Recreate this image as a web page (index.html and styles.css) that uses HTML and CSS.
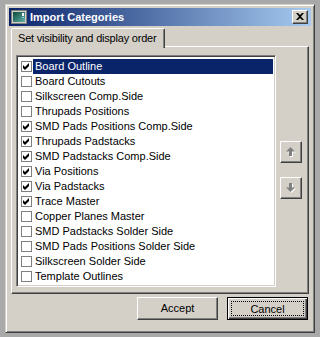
FILE: index.html
```html
<!DOCTYPE html>
<html>
<head>
<meta charset="utf-8">
<link rel="stylesheet" href="styles.css">
</head>
<body>
<div class="window">
  <div class="titlebar">
    <svg class="ticon" width="16" height="16" viewBox="0 0 16 16">
      <defs>
        <linearGradient id="ig" x1="0" y1="0" x2="1" y2="1">
          <stop offset="0" stop-color="#0d4a3c"/>
          <stop offset="1" stop-color="#5fb0a8"/>
        </linearGradient>
      </defs>
      <rect x="0.5" y="1.5" width="15" height="13" fill="#d4d0c8" stroke="#808080"/>
      <rect x="2" y="3" width="12" height="10" fill="url(#ig)"/>
      <rect x="11" y="4" width="2" height="3" fill="#ffffff"/>
      <rect x="11" y="8" width="2" height="1" fill="#9ad0f0"/>
    </svg>
    <span class="ttext">Import Categories</span>
    <div class="closebtn">
      <svg width="8" height="7" viewBox="0 0 8 7">
        <path d="M0 0h2l2 2l2-2h2l-3 3.5l3 3.5h-2l-2-2l-2 2h-2l3-3.5z" fill="#000"/>
      </svg>
    </div>
  </div>
  <div class="content">
    <div class="tabs"><div class="tab">Set visibility and display order</div></div>
    <div class="panel">
      <div class="listbox">
        <div class="row sel"><span class="cb on"><svg width="7" height="7" viewBox="0 0 7 7"><path d="M0 2L2 4L6 0V3L2 7L0 5Z" fill="#000"/></svg></span><span class="lbl">Board Outline</span></div>
        <div class="row"><span class="cb"></span><span class="lbl">Board Cutouts</span></div>
        <div class="row"><span class="cb"></span><span class="lbl">Silkscreen Comp.Side</span></div>
        <div class="row"><span class="cb"></span><span class="lbl">Thrupads Positions</span></div>
        <div class="row"><span class="cb on"><svg width="7" height="7" viewBox="0 0 7 7"><path d="M0 2L2 4L6 0V3L2 7L0 5Z" fill="#000"/></svg></span><span class="lbl">SMD Pads Positions Comp.Side</span></div>
        <div class="row"><span class="cb on"><svg width="7" height="7" viewBox="0 0 7 7"><path d="M0 2L2 4L6 0V3L2 7L0 5Z" fill="#000"/></svg></span><span class="lbl">Thrupads Padstacks</span></div>
        <div class="row"><span class="cb on"><svg width="7" height="7" viewBox="0 0 7 7"><path d="M0 2L2 4L6 0V3L2 7L0 5Z" fill="#000"/></svg></span><span class="lbl">SMD Padstacks Comp.Side</span></div>
        <div class="row"><span class="cb on"><svg width="7" height="7" viewBox="0 0 7 7"><path d="M0 2L2 4L6 0V3L2 7L0 5Z" fill="#000"/></svg></span><span class="lbl">Via Positions</span></div>
        <div class="row"><span class="cb on"><svg width="7" height="7" viewBox="0 0 7 7"><path d="M0 2L2 4L6 0V3L2 7L0 5Z" fill="#000"/></svg></span><span class="lbl">Via Padstacks</span></div>
        <div class="row"><span class="cb on"><svg width="7" height="7" viewBox="0 0 7 7"><path d="M0 2L2 4L6 0V3L2 7L0 5Z" fill="#000"/></svg></span><span class="lbl">Trace Master</span></div>
        <div class="row"><span class="cb"></span><span class="lbl">Copper Planes Master</span></div>
        <div class="row"><span class="cb"></span><span class="lbl">SMD Padstacks Solder Side</span></div>
        <div class="row"><span class="cb"></span><span class="lbl">SMD Pads Positions Solder Side</span></div>
        <div class="row"><span class="cb"></span><span class="lbl">Silkscreen Solder Side</span></div>
        <div class="row"><span class="cb"></span><span class="lbl">Template Outlines</span></div>
      </div>
      <div class="arrows">
        <div class="abtn up">
          <svg width="10" height="10" viewBox="0 0 10 10">
            <path d="M5.5 1L10 5.5H7V10H4V5.5H1Z" fill="#ffffff"/>
            <path d="M4.5 0L9 4.5H6V9H3V4.5H0Z" fill="#808080"/>
          </svg>
        </div>
        <div class="abtn down">
          <svg width="10" height="10" viewBox="0 0 10 10">
            <path d="M5.5 10L10 5.5H7V1H4V5.5H1Z" fill="#ffffff"/>
            <path d="M4.5 9L9 4.5H6V0H3V4.5H0Z" fill="#808080"/>
          </svg>
        </div>
      </div>
    </div>
    <div class="buttons">
      <div class="btn">Accept</div>
      <div class="btn default"><span class="focus">Cancel</span></div>
    </div>
  </div>
</div>
</body>
</html>
```

FILE: styles.css
```css
html, body {
  margin: 0;
  padding: 0;
}
body {
  background: #a9a9a9;
  width: 320px;
  height: 337px;
  overflow: hidden;
  font-family: "Liberation Sans", Arial, sans-serif;
  font-size: 11px;
  color: #000;
}
.window {
  margin: 4px 0 0 5px;
  width: 310px;
  height: 329px;
  box-sizing: border-box;
  background: #d4d0c8;
  border: 1px solid;
  border-color: #d4d0c8 #404040 #404040 #d4d0c8;
  box-shadow: inset 1px 1px #ffffff, inset -1px -1px #808080;
  padding: 3px;
  display: flex;
  flex-direction: column;
}
.titlebar {
  height: 18px;
  flex: none;
  display: flex;
  align-items: center;
  padding: 0 3px 0 2px;
  background: linear-gradient(to right, #0a246a, #a6caf0);
}
.ticon {
  flex: none;
  margin-right: 3px;
}
.ttext {
  color: #fff;
  font-weight: bold;
  font-size: 11px;
  white-space: nowrap;
}
.closebtn {
  margin-left: auto;
  width: 16px;
  height: 14px;
  box-sizing: border-box;
  background: #d4d0c8;
  border: 1px solid;
  border-color: #ffffff #404040 #404040 #ffffff;
  box-shadow: inset -1px -1px #808080;
  display: flex;
  align-items: center;
  justify-content: center;
  padding: 0 1px 1px 0;
}
.closebtn svg {
  display: block;
}
.content {
  flex: 1;
  display: flex;
  flex-direction: column;
  padding: 0 2px;
}
.tabs {
  margin-top: 2px;
  display: flex;
  height: 19px;
  margin-bottom: -1px;
  position: relative;
  z-index: 1;
}
.tab {
  box-sizing: border-box;
  background: #d4d0c8;
  border: 1px solid;
  border-bottom: none;
  border-color: #ffffff #404040 transparent #ffffff;
  box-shadow: inset -1px 0 #808080;
  border-radius: 2px 2px 0 0;
  padding: 3px 7px 0 6px;
  letter-spacing: -0.2px;
  white-space: nowrap;
  height: 20px;
}
.panel {
  height: 248px;
  box-sizing: border-box;
  border: 1px solid;
  border-color: #ffffff #404040 #404040 #ffffff;
  box-shadow: inset -1px -1px #808080;
  padding: 8px 0 0 4px;
  display: flex;
  align-items: flex-start;
}
.listbox {
  width: 260px;
  height: 232px;
  box-sizing: border-box;
  background: #fff;
  border: 1px solid;
  border-color: #808080 #ffffff #ffffff #808080;
  box-shadow: inset 1px 1px #404040, inset -1px -1px #d4d0c8;
  padding: 3px 2px 0 2px;
  overflow: hidden;
}
.row {
  height: 15px;
  display: flex;
  align-items: center;
}
.cb {
  flex: none;
  width: 11px;
  height: 11px;
  box-sizing: border-box;
  border: 1px solid #808080;
  background: #fff;
  margin-left: 2px;
  margin-right: 1px;
  display: flex;
  align-items: center;
  justify-content: center;
}
.cb svg {
  display: block;
}
.lbl {
  flex: 1;
  height: 15px;
  line-height: 15px;
  padding-left: 2px;
  white-space: nowrap;
}
.row.sel .lbl {
  background: #0a246a;
  color: #fff;
}
.arrows {
  margin-left: 4px;
  margin-top: 86px;
  display: flex;
  flex-direction: column;
  gap: 14px;
}
.abtn {
  width: 22px;
  height: 22px;
  box-sizing: border-box;
  border: 1px solid;
  border-color: #ffffff #404040 #404040 #ffffff;
  box-shadow: inset -1px -1px #808080;
  display: flex;
  align-items: center;
  justify-content: center;
  padding: 0 1px 1px 0;
}
.abtn svg {
  display: block;
}
.buttons {
  margin-top: 3px;
  display: flex;
  justify-content: flex-end;
  gap: 9px;
  padding-right: 1px;
}
.btn {
  width: 81px;
  height: 23px;
  box-sizing: border-box;
  border: 1px solid;
  border-color: #ffffff #404040 #404040 #ffffff;
  box-shadow: inset -1px -1px #808080;
  display: flex;
  align-items: center;
  justify-content: center;
  padding-bottom: 1px;
}
.btn.default {
  border: 1px solid #000;
  box-shadow: inset 1px 1px #ffffff, inset -1px -1px #404040, inset -2px -2px #808080;
  padding: 3px;
}
.focus {
  flex: 1;
  align-self: stretch;
  border: 1px dotted #000;
  display: flex;
  align-items: center;
  justify-content: center;
}
```
